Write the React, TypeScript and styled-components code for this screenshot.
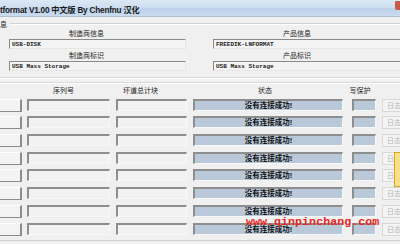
import styled, { createGlobalStyle } from 'styled-components';

const GlobalStyle = createGlobalStyle`
  html, body {
    margin: 0;
    padding: 0;
    background: #f0f0f0;
  }
  body {
    font-family: "Liberation Sans", "Noto Sans CJK SC", sans-serif;
  }
`;

const ROWS = 8;
const CJK = `"Liberation Sans", "Noto Sans CJK SC", sans-serif`;

export default function App() {
  return (
    <>
      <GlobalStyle />
      <Window>
        <TitleBar>
          <TitleText>tformat V1.00 中文版 By Chenfnu 汉化</TitleText>
          <CloseEdge />
        </TitleBar>

        <InfoGroup>
          <GroupHead>
            <GroupLabel>息</GroupLabel>
            <GroupLine />
          </GroupHead>
          <InfoGrid>
            <InfoColumn>
              <FieldLabel>制造商信息</FieldLabel>
              <InfoBox>USB-DISK</InfoBox>
              <FieldLabel>制造商标识</FieldLabel>
              <InfoBox>USB Mass Storage</InfoBox>
            </InfoColumn>
            <InfoColumn>
              <FieldLabel>产品信息</FieldLabel>
              <InfoBox>FREEDIK-LNFORMAT</InfoBox>
              <FieldLabel>产品标识</FieldLabel>
              <InfoBox>USB Mass Storage</InfoBox>
            </InfoColumn>
          </InfoGrid>
        </InfoGroup>

        <DeviceGroup>
          <DeviceGrid>
            <span />
            <ColHead $shift={-5}>序列号</ColHead>
            <ColHead $shift={-11}>坏道总计块</ColHead>
            <ColHead $shift={-3}>状态</ColHead>
            <ColHead $shift={-1}>写保护</ColHead>
            <span />
            {Array.from({ length: ROWS }).map((_, i) => (
              <DeviceRow key={i}>
                <PortButton />
                <TextCell />
                <TextCell />
                <StatusCell>没有连接成功!</StatusCell>
                <ProtectCell />
                <LogButton disabled>日志</LogButton>
              </DeviceRow>
            ))}
          </DeviceGrid>
        </DeviceGroup>

        <Watermark>www.qinpinchang.com</Watermark>
        <YellowTip />
      </Window>
    </>
  );
}

const Window = styled.div`
  position: relative;
  width: 400px;
  height: 244px;
  overflow: hidden;
  display: flex;
  flex-direction: column;
  background: #f0f0f0;
`;

const TitleBar = styled.div`
  height: 16px;
  flex: none;
  display: flex;
  align-items: center;
  justify-content: space-between;
  background: linear-gradient(180deg, #dbe8f5 0%, #cddff0 45%, #bcd2ea 55%, #c9dcef 100%);
  border-bottom: 1px solid #aebfd2;
`;

const TitleText = styled.span`
  font-family: ${CJK};
  font-size: 8.2px;
  font-weight: bold;
  letter-spacing: -0.2px;
  color: #1a1a1a;
  white-space: nowrap;
  padding-top: 1px;
`;

const CloseEdge = styled.span`
  width: 5px;
  height: 9px;
  margin-bottom: 6px;
  background: #c8584a;
  border-radius: 1px 0 0 2px;
`;

const InfoGroup = styled.div`
  flex: none;
  height: 60px;
  border-bottom: 1px solid #d6d6d6;
  box-shadow: 0 1px 0 #ffffff;
`;

const GroupHead = styled.div`
  display: flex;
  align-items: center;
  height: 9px;
  margin-top: 2px;
`;

const GroupLabel = styled.span`
  font-family: ${CJK};
  font-size: 7px;
  color: #222;
  padding-right: 3px;
`;

const GroupLine = styled.span`
  flex: 1;
  height: 1px;
  background: #d2d2d2;
  box-shadow: 0 1px 0 #ffffff;
`;

const InfoGrid = styled.div`
  display: grid;
  grid-template-columns: 177px 190px;
  column-gap: 27px;
  padding-left: 9px;
`;

const InfoColumn = styled.div`
  display: flex;
  flex-direction: column;
`;

const FieldLabel = styled.div`
  font-family: ${CJK};
  font-size: 7px;
  line-height: 12px;
  height: 11px;
  color: #222;
  text-align: center;
  padding-right: 22px;
`;

const InfoBox = styled.div`
  height: 10px;
  box-sizing: border-box;
  padding: 1px 2px 0;
  margin-bottom: 1px;
  background: #f3f3f3;
  border-top: 1px solid #8a8a8a;
  border-left: 1px solid #8a8a8a;
  border-right: 1px solid #e6e6e6;
  border-bottom: 1px solid #e6e6e6;
  font-family: "Liberation Mono", monospace;
  font-size: 6px;
  line-height: 7px;
  font-weight: bold;
  color: #222;
  white-space: nowrap;
`;

const DeviceGroup = styled.div`
  flex: none;
  height: 157px;
  margin-top: 4px;
  border-top: 1px solid #dadada;
  border-bottom: 1px solid #cfcfcf;
  box-shadow: inset 0 1px 0 #ffffff;
`;

const DeviceGrid = styled.div`
  display: grid;
  grid-template-columns: 21px 83px 71px 150px 24px 30px;
  grid-template-rows: 10px;
  grid-auto-rows: 12px;
  column-gap: 6px;
  row-gap: 5.7px;
`;

const DeviceRow = styled.div`
  display: contents;
`;

const ColHead = styled.div<{ $shift: number }>`
  font-family: ${CJK};
  font-size: 7px;
  line-height: 15px;
  color: #222;
  text-align: center;
  transform: translateX(${(p) => p.$shift}px);
  white-space: nowrap;
`;

const PortButton = styled.div`
  height: 13px;
  margin-right: -1px;
  box-sizing: border-box;
  background: #f3f3f3;
  border-right: 2px solid #8c8c8c;
  border-bottom: 1px solid #8c8c8c;
  border-top: 1px solid #ffffff;
`;

const Sunken = styled.div`
  box-sizing: border-box;
  height: 12px;
  border-top: 2px solid #8e8e8e;
  border-left: 2px solid #8e8e8e;
  border-right: 1px solid #f8f8f8;
  border-bottom: 1px solid #f8f8f8;
`;

const TextCell = styled(Sunken)`
  background: #f2f2f2;
`;

const StatusCell = styled(Sunken)`
  background: #b9c9da;
  font-family: ${CJK};
  font-size: 7.5px;
  font-weight: bold;
  line-height: 10px;
  text-align: center;
  color: #111;
  white-space: nowrap;
`;

const ProtectCell = styled(Sunken)`
  background: #b9c9da;
  margin-left: 3px;
  margin-right: -3px;
`;

const LogButton = styled.button`
  height: 13px;
  margin: 0 0 0 3px;
  padding: 0 0 0 4px;
  box-sizing: border-box;
  background: #f4f4f4;
  border: 1px solid #d8d8d8;
  border-right: none;
  font-family: ${CJK};
  font-size: 7px;
  line-height: 11px;
  color: #b4b4b4;
  text-align: left;
  white-space: nowrap;
`;

const Watermark = styled.div`
  position: absolute;
  left: 246px;
  top: 215px;
  font-family: "Liberation Mono", monospace;
  font-size: 11.7px;
  font-weight: bold;
  color: #e8261e;
  white-space: nowrap;
`;

const YellowTip = styled.div`
  position: absolute;
  left: 394px;
  top: 152px;
  width: 10px;
  height: 35px;
  box-sizing: border-box;
  background: #f7e08a;
  border: 1px solid #d9a520;
`;
